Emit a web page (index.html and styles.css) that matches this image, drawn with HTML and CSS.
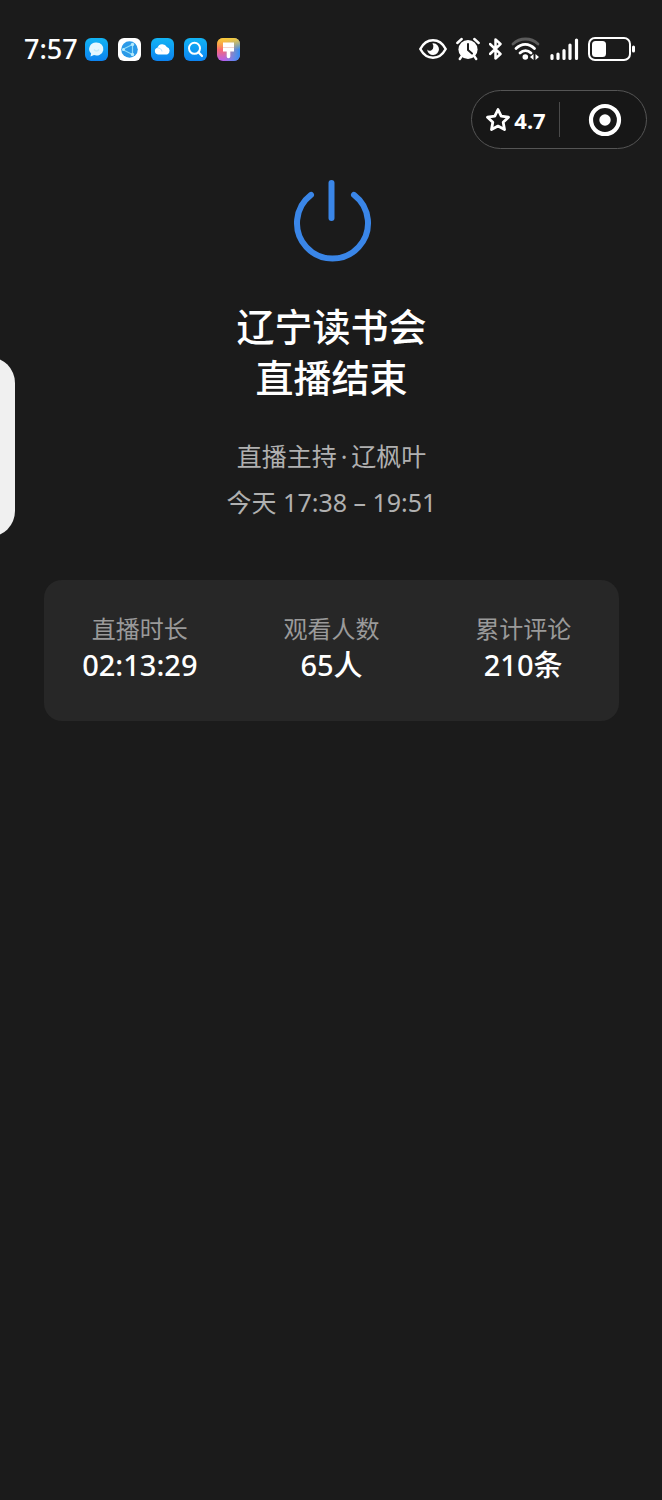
FILE: index.html
```html
<!DOCTYPE html>
<html lang="zh-CN">
  <head>
    <meta charset="UTF-8" />
    <meta name="viewport" content="width=device-width, initial-scale=1.0" />
    <title>直播结束</title>
    <link rel="stylesheet" href="styles.css">
  </head>
  <body>
    <header class="status-bar">
      <div class="status-left">
        <time class="clock">7:57</time>
        <div class="apps">
          <svg class="app" viewBox="0 0 23 23">
            <defs>
              <linearGradient id="blue" x1="0" y1="0" x2="0" y2="1">
                <stop offset="0" stop-color="#12b4f4" />
                <stop offset="1" stop-color="#0c83f0" />
              </linearGradient>
            </defs>
            <rect width="23" height="23" rx="6" fill="url(#blue)" />
            <path d="M11.500 4.500a7 6.500 0 1 1-2.500 12.600L5.500 18.500l.6-3A6.800 6.500 0 0 1 11.500 4.500z" fill="#e4f7ff" />
            <path d="M9 11.500c1.500 2 3.500 2 5 0" fill="none" stroke="#c4ecfb" stroke-width="1.500" />
          </svg>
          <svg class="app" viewBox="0 0 23 23">
            <rect width="23" height="23" rx="6" fill="#fff" />
            <circle cx="11.500" cy="11.500" r="8.300" fill="#2b9ae8" />
            <path d="M4.500 11.500 14.500 6.500v10z" fill="none" stroke="#8fdcf8" stroke-width="1.200" stroke-linejoin="round" />
            <circle cx="5.500" cy="11.500" r="1.500" fill="#b5eafc" />
            <circle cx="14.500" cy="6.500" r="1.700" fill="#b5eafc" />
            <circle cx="14.500" cy="16.500" r="1.700" fill="#b5eafc" />
          </svg>
          <svg class="app" viewBox="0 0 23 23">
            <rect width="23" height="23" rx="6" fill="url(#blue)" />
            <path d="M7 16.500a3.400 3.400 0 0 1-.5-6.700 5 5 0 0 1 9.300-.8 4 4 0 0 1 .4 7.500z" fill="#fff" />
            <path d="M6.500 10a4 4 0 0 1 4.500 3.500" fill="none" stroke="#b5e2ff" stroke-width="1" />
          </svg>
          <svg class="app" viewBox="0 0 23 23">
            <rect width="23" height="23" rx="6" fill="url(#blue)" />
            <circle cx="10.500" cy="10.300" r="5.500" fill="none" stroke="#fff" stroke-width="2" />
            <path d="m14.500 14.300 3.500 3.700" stroke="#fff" stroke-width="2.200" stroke-linecap="round" />
          </svg>
          <svg class="app" viewBox="0 0 23 23">
            <defs>
              <linearGradient id="left" x1="0" y1="0" x2="0" y2="1">
                <stop offset="0" stop-color="#f79a35" />
                <stop offset=".5" stop-color="#fb6a70" />
                <stop offset="1" stop-color="#b45cf0" />
              </linearGradient>
              <linearGradient id="right" x1="0" y1="0" x2="1" y2="0">
                <stop offset=".3" stop-color="#35bdf2" stop-opacity="0" />
                <stop offset="1" stop-color="#2f8cf5" />
              </linearGradient>
              <linearGradient id="top" x1="0" y1="0" x2="0" y2="1">
                <stop offset="0" stop-color="#f8cc3c" />
                <stop offset=".5" stop-color="#f8cc3c" stop-opacity="0" />
              </linearGradient>
            </defs>
            <rect width="23" height="23" rx="6" fill="url(#left)" />
            <rect width="23" height="23" rx="6" fill="url(#right)" />
            <rect width="23" height="23" rx="6" fill="url(#top)" />
            <path d="M6 4.500h11V13.500H13.300v5a1.800 1.800 0 0 1-3.600 0v-5H6z" fill="#fff" />
            <path d="M6 9.500h11" stroke="#f5d6cf" stroke-width="1" />
          </svg>
        </div>
      </div>

      <div class="status-right">
        <svg width="28" height="24" viewBox="0 0 28 24">
          <path d="M1.300 12C4.500 6 9 3.300 14 3.300S23.500 6 26.700 12C23.500 18 19 20.700 14 20.700S4.500 18 1.300 12z" fill="none" stroke="#fff" stroke-width="2.500" stroke-linejoin="round" />
          <path d="M14.500 6.300a5.900 5.900 0 1 1-6.300 6.300 3.500 3.500 0 0 0 6.100-2.500 4 4 0 0 0-1-3.600z" fill="#fff" />
        </svg>
        <svg width="24" height="24" viewBox="0 0 24 24">
          <circle cx="12" cy="12.500" r="9.600" fill="#fff" />
          <path d="M1.300 6 5.700 2M22.700 6 18.300 2M5.500 19.500 3.800 22M18.500 19.500l1.700 2.500" stroke="#fff" stroke-width="2.400" stroke-linecap="round" />
          <path d="M12 7v6l4 3.500" fill="none" stroke="#1b1b1b" stroke-width="2" stroke-linecap="round" stroke-linejoin="round" />
        </svg>
        <svg width="13" height="24" viewBox="0 0 13 24">
          <path d="M1 7 11.500 17 6.500 21.500V2.500L11.500 7 1 17" fill="none" stroke="#fff" stroke-width="2.500" stroke-linecap="round" stroke-linejoin="round" />
        </svg>
        <svg width="30" height="24" viewBox="0 0 30 24">
          <g fill="none" stroke="#fff" stroke-width="2.800" stroke-linecap="round">
            <path d="M2 7C9 .3 20 .3 27 7" stroke="#5b5b5b" />
            <path d="M5 11.500c5.500-5.600 13-5.600 18.500 0" />
            <path d="M9 16c3.300-3.300 7.700-3.300 11 0" />
          </g>
          <circle cx="14.300" cy="20" r="2.800" fill="#fff" />
          <path d="M22.500 17v6L19 20zM24.500 17v6l3.500-3z" fill="#fff" />
        </svg>
        <svg width="29" height="24" viewBox="0 0 29 24">
          <path d="M2 21.500v-3M8 21.500V17M14 21.500v-8M20 21.500V8M26.500 21.500V3" stroke="#fff" stroke-width="3.200" stroke-linecap="round" />
        </svg>
        <svg width="47" height="24" viewBox="0 0 47 24">
          <rect x="1" y="1" width="41" height="22" rx="6" fill="none" stroke="#fff" stroke-width="2" />
          <rect x="4" y="4" width="14" height="16" rx="3.500" fill="#fff" />
          <rect x="44" y="8.500" width="3" height="7" rx="1.500" fill="#fff" />
        </svg>
      </div>
    </header>

    <nav class="capsule">
      <button class="rating" type="button">
        <svg width="26" height="26" viewBox="0 0 26 26">
          <path d="m13 2.500 3.200 6.700 7.300 1-5.300 5.100 1.300 7.300-6.500-3.500-6.500 3.500 1.300-7.300-5.300-5.100 7.300-1z" fill="none" stroke="#fff" stroke-width="2.800" stroke-linejoin="round" />
        </svg>
        <span>4.7</span>
      </button>
      <button class="close" type="button" aria-label="关闭">
        <svg width="34" height="34" viewBox="0 0 34 34">
          <circle cx="17" cy="17" r="14" fill="none" stroke="#fff" stroke-width="4.200" />
          <circle cx="17" cy="17" r="5.700" fill="#fff" />
        </svg>
      </button>
    </nav>

    <button class="drawer" type="button" aria-label="展开"></button>

    <main class="ended">
      <svg class="power" width="80" height="84" viewBox="0 0 80 84">
        <g fill="none" stroke="#3a86e8" stroke-width="6" stroke-linecap="round">
          <path d="M39.500 4v35" />
          <path d="M19 15.800a35.500 35.500 0 1 0 43 0" />
        </g>
      </svg>

      <h1 class="title">辽宁读书会<br />直播结束</h1>

      <div class="meta">
        <p>直播主持<span class="dot">·</span>辽枫叶</p>
        <p>今天 17:38 – 19:51</p>
      </div>

      <dl class="stats">
        <div class="stat">
          <dt>直播时长</dt>
          <dd>02:13:29</dd>
        </div>
        <div class="stat">
          <dt>观看人数</dt>
          <dd>65人</dd>
        </div>
        <div class="stat">
          <dt>累计评论</dt>
          <dd>210条</dd>
        </div>
      </dl>
    </main>
  </body>
</html>
```
FILE: styles.css
```css
:root {
  --bg: #1b1b1b;
  --card: #272727;
  --text: #fff;
  --muted: #b0b0b0;
  --label: #9a9a9a;
}

* {
  box-sizing: border-box;
}

body {
  margin: 0;
  min-height: 100vh;
  background: var(--bg);
  color: var(--text);
  font-family: "Noto Sans", "Noto Sans CJK SC", sans-serif;
}

button {
  margin: 0;
  padding: 0;
  border: 0;
  background: none;
  color: inherit;
  font: inherit;
}

svg {
  display: block;
  flex: none;
}

/* 状态栏 */
.status-bar {
  display: flex;
  justify-content: space-between;
  align-items: center;
  height: 61px;
  padding: 37px 27px 0 24px;
}

.status-left,
.status-right,
.apps {
  display: flex;
  align-items: center;
}

.status-left {
  gap: 7px;
}

.status-right {
  gap: 9px;
}

.apps {
  gap: 10px;
}

.app {
  width: 23px;
  height: 23px;
}

.clock {
  font-size: 27px;
  line-height: 24px;
  font-weight: 500;
}

/* 右上角胶囊 */
.capsule {
  display: flex;
  align-items: center;
  width: 176px;
  height: 59px;
  margin: 29px 15px 0 auto;
  border: 1px solid #555;
  border-radius: 30px;
  background: #171717;
}

.rating,
.close {
  display: flex;
  align-items: center;
  justify-content: center;
  height: 35px;
}

.rating {
  width: 88px;
  gap: 3px;
  border-right: 1px solid #4a4a4a;
  font-size: 22px;
  line-height: 32px;
  font-weight: 700;
}

.close {
  flex: 1;
  padding-left: 3px;
}

/* 左侧抽屉把手，一半在屏幕外 */
.drawer {
  position: absolute;
  top: 357px;
  left: -15px;
  width: 30px;
  height: 180px;
  border-radius: 0 26px 26px 0;
  background: #f0f0f0;
}

.ended {
  display: flex;
  flex-direction: column;
  align-items: center;
  padding: 30px 43px 30px 44px;
}

.title {
  margin: 38px 0 0;
  font-size: 38px;
  line-height: 51px;
  font-weight: 500;
  text-align: center;
}

.meta {
  margin-top: 30px;
  color: var(--muted);
  font-size: 25px;
  line-height: 46px;
  text-align: center;
}

.meta p {
  margin: 0;
}

.dot {
  margin: 0 4px;
}

/* 数据卡片 */
.stats {
  display: grid;
  grid-template-columns: repeat(3, 1fr);
  width: 100%;
  margin: 55px 0 0;
  padding: 32px 0 38px;
  border-radius: 18px;
  background: var(--card);
  text-align: center;
}

.stat dt {
  color: var(--label);
  font-size: 24px;
  line-height: 34px;
}

.stat dd {
  margin: 0;
  font-size: 29px;
  line-height: 37px;
  font-weight: 500;
}
```
